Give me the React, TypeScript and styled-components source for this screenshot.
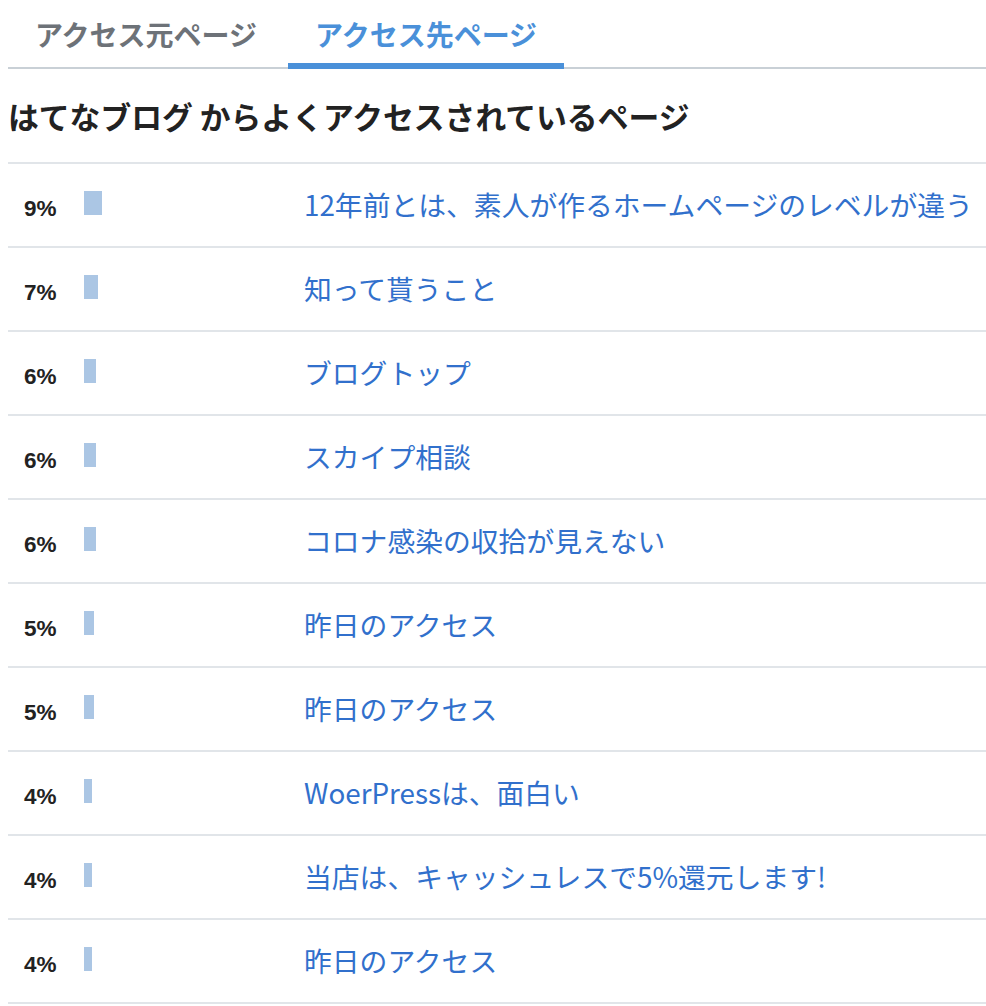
import { useState } from "react";
import styled, { createGlobalStyle } from "styled-components";

type PageRow = {
  share: number;
  title: string;
};

const rows: PageRow[] = [
  { share: 9, title: "12年前とは、素人が作るホームページのレベルが違う" },
  { share: 7, title: "知って貰うこと" },
  { share: 6, title: "ブログトップ" },
  { share: 6, title: "スカイプ相談" },
  { share: 6, title: "コロナ感染の収拾が見えない" },
  { share: 5, title: "昨日のアクセス" },
  { share: 5, title: "昨日のアクセス" },
  { share: 4, title: "WoerPressは、面白い" },
  { share: 4, title: "当店は、キャッシュレスで5%還元します!" },
  { share: 4, title: "昨日のアクセス" }
];

const tabs = ["アクセス元ページ", "アクセス先ページ"];

export default function App() {
  const [activeTab, setActiveTab] = useState(1);

  return (
    <>
      <GlobalStyle />
      <Wrapper>
        <Tabs>
          {tabs.map((label, index) => (
            <Tab
              key={label}
              $active={index === activeTab}
              onClick={() => setActiveTab(index)}
            >
              {label}
            </Tab>
          ))}
        </Tabs>
        <Heading>はてなブログ からよくアクセスされているページ</Heading>
        <Table>
          {rows.map((row, index) => (
            <Row key={index}>
              <Percent>{row.share}%</Percent>
              <BarCell>
                {/* 2px of bar per percent */}
                <Bar style={{ width: row.share * 2 }} />
              </BarCell>
              <PageLink href="#">{row.title}</PageLink>
            </Row>
          ))}
        </Table>
      </Wrapper>
    </>
  );
}

const GlobalStyle = createGlobalStyle`
  body {
    margin: 0;
    background: #fff;
    font-family: "Noto Sans CJK JP", "Noto Sans", sans-serif;
  }
`;

const Wrapper = styled.div`
  padding-left: 8px;
  display: flex;
  flex-direction: column;
`;

const Tabs = styled.div`
  display: flex;
  gap: 4px;
  border-bottom: 2px solid #c9d0d6;
`;

const Tab = styled.button<{ $active?: boolean }>`
  background: none;
  border: none;
  padding: 4px 27px 0;
  height: 69px;
  margin-bottom: -2px;
  box-sizing: border-box;
  border-bottom: 6px solid
    ${({ $active }) => ($active ? "#4a90d9" : "transparent")};
  font-family: inherit;
  font-size: 28px;
  font-weight: 700;
  line-height: 1;
  color: ${({ $active }) => ($active ? "#4a90d9" : "#6d7278")};
  cursor: pointer;
`;

const Heading = styled.h2`
  margin: 0;
  height: 93px;
  display: flex;
  align-items: center;
  font-size: 30.8px;
  font-weight: 700;
  color: #222;
`;

const Table = styled.div`
  display: flex;
  flex-direction: column;
  border-top: 2px solid #e1e5e9;
`;

const Row = styled.div`
  display: grid;
  grid-template-columns: 76px 220px 1fr;
  align-items: center;
  height: 84px;
  box-sizing: border-box;
  border-bottom: 2px solid #e1e5e9;
`;

const Percent = styled.span`
  padding: 7px 0 0 16px;
  font-family: "Liberation Sans", "Noto Sans", sans-serif;
  font-size: 22.5px;
  font-weight: 700;
  color: #222;
`;

const BarCell = styled.div`
  display: flex;
  align-items: center;
  margin-top: -4px;
`;

const Bar = styled.div`
  height: 24px;
  background: #abc6e4;
`;

const PageLink = styled.a`
  padding-bottom: 3px;
  font-size: 27.8px;
  color: #3170cc;
  text-decoration: none;
  white-space: nowrap;
`;
